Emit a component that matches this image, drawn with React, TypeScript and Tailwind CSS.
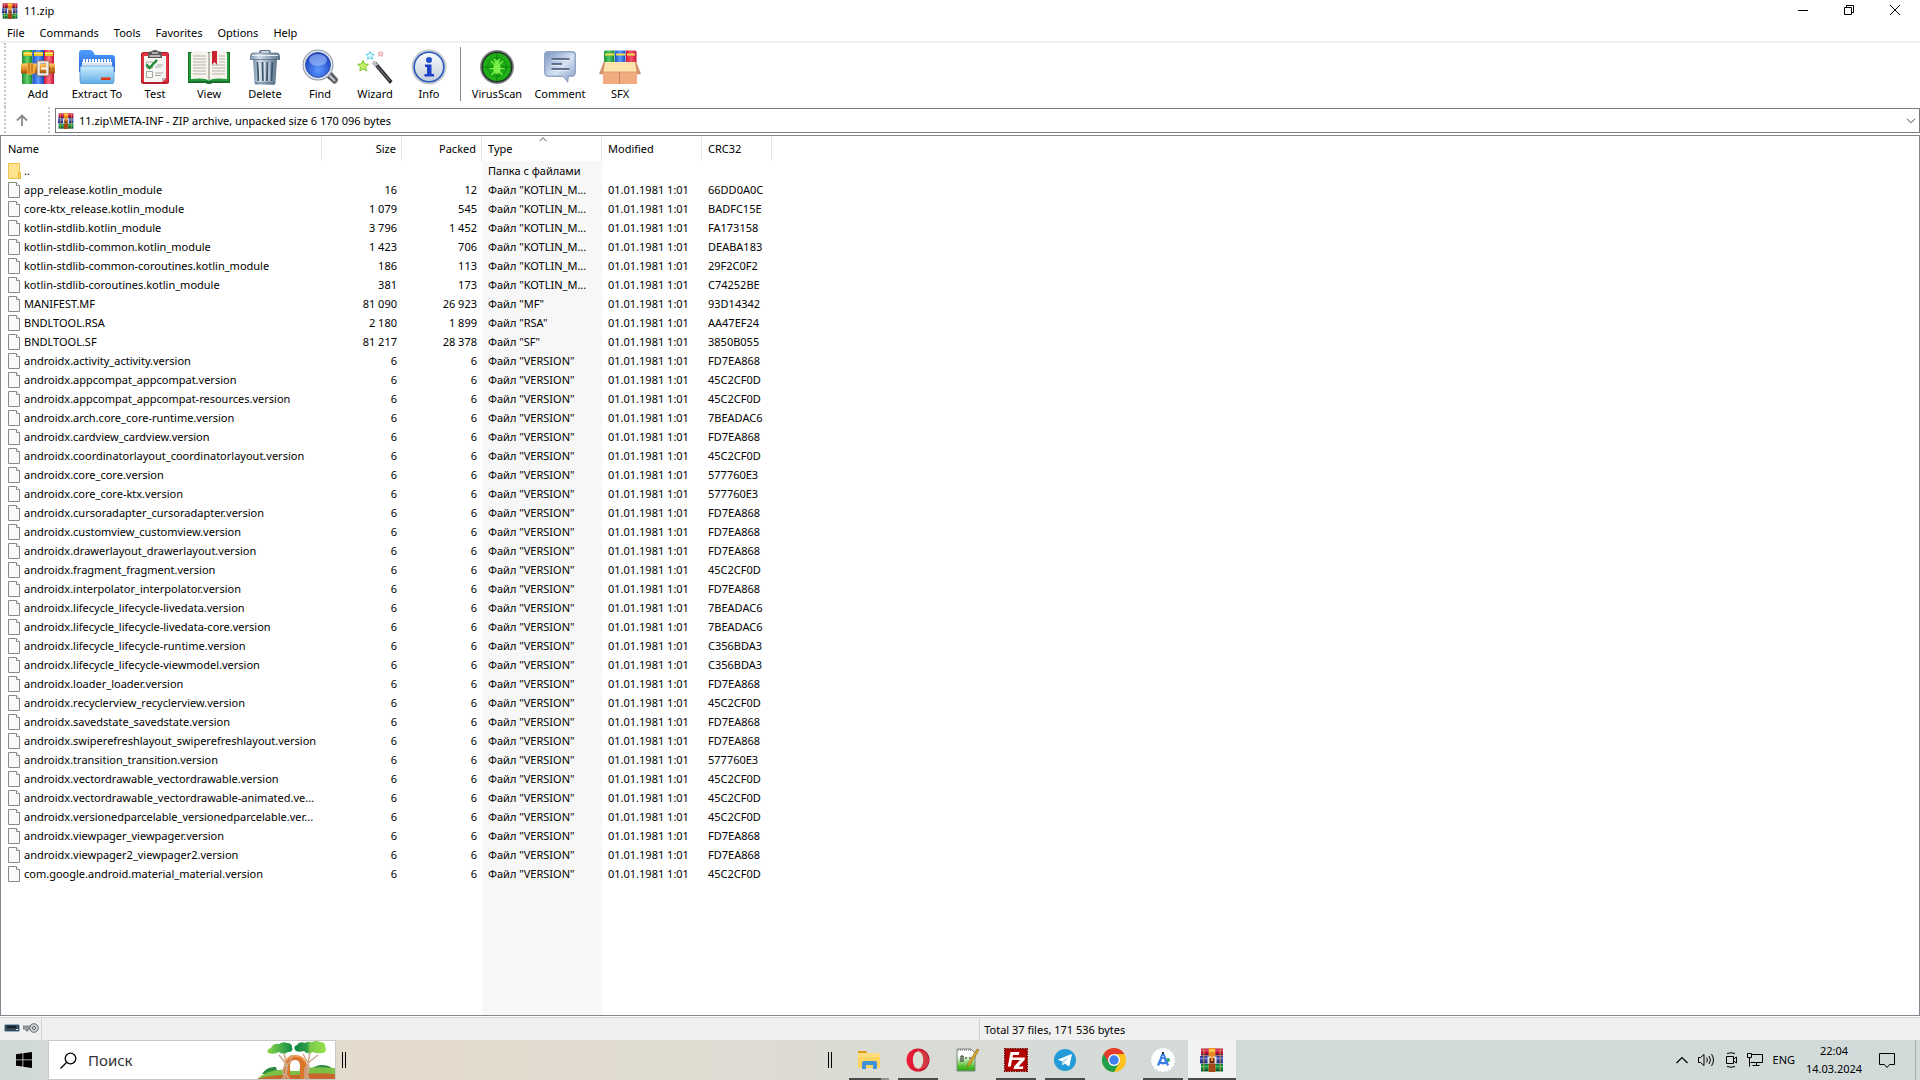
import React from "react";

type Row = [string, string, string, string, string];

const V = 'Файл "VERSION"';
const K = 'Файл "KOTLIN_M...';
const v = (name: string, crc: string): Row => [name + ".version", "6", "6", V, crc];

const rows: Row[] = [
  ["app_release.kotlin_module", "16", "12", K, "66DD0A0C"],
  ["core-ktx_release.kotlin_module", "1 079", "545", K, "BADFC15E"],
  ["kotlin-stdlib.kotlin_module", "3 796", "1 452", K, "FA173158"],
  ["kotlin-stdlib-common.kotlin_module", "1 423", "706", K, "DEABA183"],
  ["kotlin-stdlib-common-coroutines.kotlin_module", "186", "113", K, "29F2C0F2"],
  ["kotlin-stdlib-coroutines.kotlin_module", "381", "173", K, "C74252BE"],
  ["MANIFEST.MF", "81 090", "26 923", 'Файл "MF"', "93D14342"],
  ["BNDLTOOL.RSA", "2 180", "1 899", 'Файл "RSA"', "AA47EF24"],
  ["BNDLTOOL.SF", "81 217", "28 378", 'Файл "SF"', "3850B055"],
  v("androidx.activity_activity", "FD7EA868"),
  v("androidx.appcompat_appcompat", "45C2CF0D"),
  v("androidx.appcompat_appcompat-resources", "45C2CF0D"),
  v("androidx.arch.core_core-runtime", "7BEADAC6"),
  v("androidx.cardview_cardview", "FD7EA868"),
  v("androidx.coordinatorlayout_coordinatorlayout", "45C2CF0D"),
  v("androidx.core_core", "577760E3"),
  v("androidx.core_core-ktx", "577760E3"),
  v("androidx.cursoradapter_cursoradapter", "FD7EA868"),
  v("androidx.customview_customview", "FD7EA868"),
  v("androidx.drawerlayout_drawerlayout", "FD7EA868"),
  v("androidx.fragment_fragment", "45C2CF0D"),
  v("androidx.interpolator_interpolator", "FD7EA868"),
  v("androidx.lifecycle_lifecycle-livedata", "7BEADAC6"),
  v("androidx.lifecycle_lifecycle-livedata-core", "7BEADAC6"),
  v("androidx.lifecycle_lifecycle-runtime", "C356BDA3"),
  v("androidx.lifecycle_lifecycle-viewmodel", "C356BDA3"),
  v("androidx.loader_loader", "FD7EA868"),
  v("androidx.recyclerview_recyclerview", "45C2CF0D"),
  v("androidx.savedstate_savedstate", "FD7EA868"),
  v("androidx.swiperefreshlayout_swiperefreshlayout", "FD7EA868"),
  v("androidx.transition_transition", "577760E3"),
  v("androidx.vectordrawable_vectordrawable", "45C2CF0D"),
  ["androidx.vectordrawable_vectordrawable-animated.ve...", "6", "6", V, "45C2CF0D"],
  ["androidx.versionedparcelable_versionedparcelable.ver...", "6", "6", V, "45C2CF0D"],
  v("androidx.viewpager_viewpager", "FD7EA868"),
  v("androidx.viewpager2_viewpager2", "FD7EA868"),
  v("com.google.android.material_material", "45C2CF0D"),
];

/* ---------- icons ---------- */

const Books = ({ className = "size-4" }: { className?: string }) => (
  <svg viewBox="0 0 24 24" className={`${className} shrink-0`}>
    <path d="M1 .5h22v7H1z" fill="#b3123f" />
    <path d="M1 1.5h22v2H1z" fill="#e2456c" />
    <path d="M0 8h23v7.5H0z" fill="#2f3f9c" />
    <path d="M0 9.500h23v2H0z" fill="#6a7bd0" />
    <path d="M1 16h22v7.500H1z" fill="#0b7d3b" />
    <path d="M1 17.500h22v2H1z" fill="#36b35f" />
    <path d="M1 6h8v1.200H1zM15 6h8v1.200h-8zM1 14h8v1H1zM15 14h7v1h-7zM1 22h8v1H1zM15 22h8v1h-8z" fill="#111b3a" opacity=".65" />
    <path d="M3 .5h1.500v7H3zM19.500.5H21v7h-1.500zM3 8h1.500v7.500H3zM19.500 8H21v7.500h-1.500zM3 16h1.500v7.500H3zM19.500 16H21v7.500h-1.500z" fill="#d9a93a" opacity=".55" />
    <path d="M8.500 0h7v7l-1 2v7l1 1v7h-7v-7l1-1V9l-1-2z" fill="#e98a22" />
    <path d="M9 16h6v8H9z" fill="#a4481a" />
    <path d="M9 1h6v3H9z" fill="#ffc24a" />
    <path d="M7.500 8.500h9v7h-9z" fill="#e8e4dc" />
    <path d="M9.500 10h5v5.500h-5z" fill="#6a2c18" />
    <path d="M11 8h2v5h-2z" fill="#f59a2b" />
  </svg>
);

const AddIcon = () => (
  <svg viewBox="0 0 34 34" className="size-[34px]">
    <defs>
      <linearGradient id="ag"><stop offset="0" stopColor="#1f8f35" /><stop offset=".5" stopColor="#63d26a" /><stop offset="1" stopColor="#17812d" /></linearGradient>
      <linearGradient id="ab"><stop offset="0" stopColor="#1d4fc4" /><stop offset=".5" stopColor="#5b9bff" /><stop offset="1" stopColor="#1a43b0" /></linearGradient>
      <linearGradient id="ar"><stop offset="0" stopColor="#cf1538" /><stop offset=".5" stopColor="#ff6f85" /><stop offset="1" stopColor="#c30f2f" /></linearGradient>
      <linearGradient id="ao" x2="0" y2="1"><stop offset="0" stopColor="#ffd065" /><stop offset=".5" stopColor="#e8912a" /><stop offset="1" stopColor="#9c4a0c" /></linearGradient>
    </defs>
    <path d="M1 2q0-2 2-2h8.500v34H1z" fill="url(#ag)" />
    <path d="M11.500 0H23v34H11.500z" fill="url(#ab)" />
    <path d="M23 0h8q2 0 2 2v32H23z" fill="url(#ar)" />
    <path d="M2.500 2H11v4H2.500zM13 2h9v4h-9zM24 2h8v4h-8z" fill="#e9c51f" />
    <path d="M2.500 3H11v1H2.500zM13 3h9v1h-9zM24 3h8v1h-8z" fill="#fff08a" />
    <path d="M0 13.500h34v10H0z" fill="url(#ao)" />
    <path d="M6 12.500q5 0 8 2.500v8q-3 2-8 2z" fill="#f3aa3d" />
    <path d="M8 13v11M11 14v9" stroke="#a75a12" />
    <path d="M17.500 12h9v12.500h-9z" fill="none" stroke="#ededed" strokeWidth="2.600" />
    <path d="M16 11h12v15H16z" fill="none" stroke="#7b4a18" strokeWidth=".6" />
    <path d="M20 17.500h6v2h-6z" fill="#fff" />
    <path d="M28.500 18.500h1M31.500 18.500h1" stroke="#6d3304" strokeWidth="2" />
  </svg>
);

const ExtractIcon = () => (
  <svg viewBox="0 0 36 34" className="h-[34px] w-9">
    <defs>
      <linearGradient id="ef" x2="0" y2="1"><stop offset="0" stopColor="#cdeeff" /><stop offset="1" stopColor="#5cabe2" /></linearGradient>
      <linearGradient id="eb" x2="0" y2="1"><stop offset="0" stopColor="#4d9cff" /><stop offset="1" stopColor="#2563d6" /></linearGradient>
    </defs>
    <path d="M0 3q0-3 3-3h8q2 0 3 1.500L16 5h17q3 0 3 3v14H0z" fill="url(#eb)" />
    <path d="M3 12h30v8H3z" fill="#eef4fa" />
    <path d="M4 10.500h28" stroke="#fff" strokeWidth="3" strokeDasharray="2 1" />
    <path d="M4 14h28" stroke="#c8d3df" />
    <path d="M1 18q0-2 2-2h30q2 0 2 2v13q0 3-3 3H4q-3 0-3-3z" fill="url(#ef)" stroke="#4b95d6" strokeWidth=".8" />
    <path d="M2 24h32" stroke="#9dd2f3" />
    <path d="M22 27.500h9.500v2.500H22z" fill="#e33516" />
  </svg>
);

const TestIcon = () => (
  <svg viewBox="0 0 30 34" className="h-[34px] w-[30px]">
    <rect x="1" y="2" width="28" height="32" rx="2.500" fill="#b81d2a" />
    <rect x="2" y="3" width="26" height="29" rx="2" fill="#de3341" />
    <path d="M4 6h22v22l-4 4H4z" fill="#f6f6f4" />
    <path d="M22 32v-4h4z" fill="#b9b9b5" />
    <path d="M8 3q0-1.500 2-1.500h1.500Q12 0 15 0t3.500 1.500H20q2 0 2 1.500v5H8z" fill="#5a5556" />
    <path d="M9.500 6h11" stroke="#d4d4d4" strokeWidth="1.600" />
    <path d="M12 3h6" stroke="#ccc" strokeWidth="1.500" />
    <path d="M6.500 12h6v6h-6zM6.500 21.500h6v6h-6z" fill="none" stroke="#a6a6a3" />
    <path d="m6.500 14.500 3 3.500 7.500-8" fill="none" stroke="#1f8b33" strokeWidth="2.500" />
    <path d="M17 15h6M15 17h6M15 23h8M15 25.500h6" stroke="#a8a8a5" />
  </svg>
);

const ViewIcon = () => (
  <svg viewBox="0 0 42 34" className="h-[34px] w-[42px]">
    <path d="M0 2h42v31H24l-1 1h-4l-1-1H0z" fill="#176f2a" />
    <path d="M1 3h40v28H1z" fill="#259a3c" />
    <path d="M3 3q1-2 8-2 8 0 10 2 2-2 10-2 7 0 8 2v26q-14-1.500-18 1.500Q17 27.500 3 29z" fill="#f7f4ee" />
    <path d="M21 3v27" stroke="#a7a49b" strokeWidth="1.500" />
    <path d="M5 6h13M5 9h13M5 12h13M5 15h13M5 18h13M5 21h13M5 24h13M31 6h6M31 9h6M31 12h6M24 15h13M24 18h13M24 21h13M24 24h13" stroke="#b5b2aa" />
    <path d="M24 1h5v14l-2.500-3-2.500 3z" fill="#c9212d" />
  </svg>
);

const DeleteIcon = () => (
  <svg viewBox="0 0 30 35" className="h-[35px] w-[30px]">
    <defs><linearGradient id="dg"><stop offset="0" stopColor="#7890a8" /><stop offset=".3" stopColor="#d3dfeb" /><stop offset=".65" stopColor="#93a8be" /><stop offset="1" stopColor="#5d7489" /></linearGradient></defs>
    <path d="M10 3.500V2q0-1.500 2-1.500h6q2 0 2 1.500v1.500" fill="none" stroke="#5e7286" strokeWidth="1.500" />
    <path d="M3 9h24l-1.500 24q-.2 2-2 2h-17q-1.800 0-2-2z" fill="url(#dg)" />
    <path d="M1 4.500Q1 3 3 3h24q2 0 2 1.500L30 7v2.500H0V7z" fill="url(#dg)" stroke="#536a80" strokeWidth=".7" />
    <path d="M2 5.500h26" stroke="#e7eff6" />
    <path d="m7.500 12 1 19M12.500 12l.5 19M17.500 12l-.5 19M22.500 12l-1 19" stroke="#3f556b" strokeWidth="1.800" />
    <path d="m9 12 1 19M14.300 12v19M19 12v19" stroke="#edf3f8" strokeWidth=".8" />
    <path d="M5 33h20" stroke="#516679" />
  </svg>
);

const FindIcon = () => (
  <svg viewBox="0 0 36 36" className="size-9">
    <defs><radialGradient id="fg" cx=".5" cy=".7" r=".7"><stop offset="0" stopColor="#5d9bff" /><stop offset="1" stopColor="#1337b8" /></radialGradient></defs>
    <path d="m24 24 4-3 8 9q0 4-4 5l-9-8z" fill="#5d6067" />
    <path d="m26 25 7 7" stroke="#c5c8ce" strokeWidth="2" />
    <circle cx="16" cy="16" r="15.500" fill="#8f98a8" />
    <circle cx="16" cy="16" r="14.500" fill="#dfe5ee" />
    <circle cx="16" cy="16" r="12.500" fill="url(#fg)" stroke="#2b4aa2" strokeWidth=".8" />
    <ellipse cx="16" cy="11" rx="9" ry="6" fill="#a9c4ff" opacity=".6" />
  </svg>
);

const WizardIcon = () => (
  <svg viewBox="0 0 36 35" className="h-[35px] w-9">
    <path d="m16 14 3-2.500L35.500 31 33 34z" fill="#2f3033" />
    <path d="m14.500 13 3-2.500 3.500 4-3 2.500z" fill="#bfc1c4" />
    <path d="m19 15 14 16" stroke="#85878c" />
    <path d="m6 10.500 1.600 3.500 3.800.3-2.700 2.700 1.100 3.900-3.800-2-3.200 2 .7-3.900L.7 14.300l3.600-.4z" fill="#c4f06a" stroke="#7ac42c" />
    <path d="m13 1.500 1.300 2.600 2.800.3-2 2 .7 2.800-2.800-1.400-2.400 1.600.4-2.900-1.800-1.900 2.500-.4z" fill="#e6fafe" stroke="#58cde6" />
    <path d="m23.500 1.200.8 1.600 2 .2-1.400 1.400.4 1.900-1.800-1-1.800.9.400-1.900-1.200-1.300 2-.2z" fill="#ffe6e6" stroke="#ee8b8e" strokeWidth=".8" />
  </svg>
);

const InfoIcon = () => (
  <svg viewBox="0 0 36 36" className="size-9">
    <defs><linearGradient id="ig" x2="0" y2="1"><stop offset="0" stopColor="#f8fafc" /><stop offset="1" stopColor="#c4cedb" /></linearGradient></defs>
    <circle cx="18" cy="18" r="17.500" fill="#c3c9d1" />
    <circle cx="18" cy="18" r="14.800" fill="url(#ig)" stroke="#2859bd" strokeWidth="1.600" />
    <circle cx="18" cy="11" r="3" fill="#1d4fcc" />
    <path d="M14 15.500h6.500V25H23v2.500H13.500V25H16v-7h-2z" fill="#1b41c4" />
  </svg>
);

const VirusIcon = () => (
  <svg viewBox="0 0 34 34" className="size-[34px]">
    <circle cx="17" cy="17" r="17" fill="#858a8b" />
    <circle cx="17" cy="17" r="15.500" fill="#24342a" />
    <circle cx="17" cy="17" r="14" fill="#1fae16" />
    <path d="M17 3v28M3 17h28" stroke="#0d7d10" />
    <circle cx="17" cy="17" r="9.500" fill="none" stroke="#0c8a10" />
    <path d="m11 11 4 4m8-4-4 4M9.500 18.500h15M11.500 25l3.500-4m7.500 4L19 21M14 9l3 3 3-3" stroke="#7df04a" strokeWidth="1.200" fill="none" />
    <ellipse cx="17" cy="18.500" rx="3.800" ry="5.200" fill="#7df04a" />
    <circle cx="17" cy="12.500" r="2.300" fill="#7df04a" />
  </svg>
);

const CommentIcon = () => (
  <svg viewBox="0 0 32 34" className="h-[34px] w-8">
    <defs><linearGradient id="cg" x2="1" y2="1"><stop offset="0" stopColor="#7f9ac6" /><stop offset=".55" stopColor="#d5e2f2" /><stop offset="1" stopColor="#88a0ca" /></linearGradient></defs>
    <path d="M4 1h24q4 0 4 4v17q0 5-5 5h-2l-1 6-5-6H5q-5 0-5-5V5q0-4 4-4z" fill="#92a5c5" />
    <path d="M5 2.500h22q3.500 0 3.500 3.500v16q0 3.500-3.500 3.500h-3.500L23 30l-4-4.500H5q-3.500 0-3.500-3.500V6q0-3.500 3.500-3.500z" fill="url(#cg)" />
    <path d="M7.500 10h18M7.500 15h10.500M7.500 20h18" stroke="#fff" />
    <path d="M7.500 9h18M7.500 14h10.500M7.500 19h18" stroke="#3e4e6c" strokeWidth="1.600" />
  </svg>
);

const SfxIcon = () => (
  <svg viewBox="0 0 42 34" className="h-[34px] w-[42px]">
    <defs>
      <linearGradient id="sg"><stop offset="0" stopColor="#17943a" /><stop offset=".5" stopColor="#4fc86a" /><stop offset="1" stopColor="#148235" /></linearGradient>
      <linearGradient id="sb"><stop offset="0" stopColor="#1d57cc" /><stop offset=".5" stopColor="#5c9cff" /><stop offset="1" stopColor="#1a4bb8" /></linearGradient>
      <linearGradient id="sr"><stop offset="0" stopColor="#d81738" /><stop offset=".5" stopColor="#f9556e" /><stop offset="1" stopColor="#c81232" /></linearGradient>
    </defs>
    <path d="M5 2q0-1.500 1.500-1.500H15.500v13H5z" fill="url(#sg)" />
    <path d="M16 .5h10.500v13H16z" fill="url(#sb)" />
    <path d="M27 .5h9Q37.500.500 37.500 2v11.500H27z" fill="url(#sr)" />
    <path d="M6 4.500h9M17 4.500h9M28 4.500h8" stroke="#f7e04a" strokeWidth="2" />
    <path d="M4 14h34v20H4z" fill="#f2aa80" />
    <path d="M5 12h32l1 10H4z" fill="#ffe3ae" />
    <path d="m5 11-5 13 4 .5L6 13zM37 11l5 13-4 .5L36 13z" fill="#d3946b" />
    <path d="M4 22h34" stroke="#e89b6c" />
    <path d="M20.500 22v12" stroke="#c98560" />
  </svg>
);

const FileIcon = () => (
  <svg viewBox="0 0 12 16" className="h-4 w-3 shrink-0">
    <path d="M.5.500h8l3 3v12H.5z" fill="#f8f9fa" stroke="#8a8a8a" />
    <path d="M8.500.5v3h3" fill="#fff" stroke="#8a8a8a" />
  </svg>
);

const FolderIcon = () => (
  <svg viewBox="0 0 13 16" className="h-4 w-[13px] shrink-0">
    <path d="M.5.500h11v15H.5z" fill="#ffe38f" stroke="#ecc34d" />
    <path d="M10.500 9.500h2v6h-2z" fill="#ffd766" stroke="#e3b53c" />
  </svg>
);

/* ---------- toolbar ---------- */

const tools = [
  { label: "Add", icon: <AddIcon />, w: "w-14" },
  { label: "Extract To", icon: <ExtractIcon />, w: "w-[62px]" },
  { label: "Test", icon: <TestIcon />, w: "w-[54px]" },
  { label: "View", icon: <ViewIcon />, w: "w-[54px]" },
  { label: "Delete", icon: <DeleteIcon />, w: "w-[58px]" },
  { label: "Find", icon: <FindIcon />, w: "w-[52px]" },
  { label: "Wizard", icon: <WizardIcon />, w: "w-[58px]" },
  { label: "Info", icon: <InfoIcon />, w: "w-[50px]" },
];
const tools2 = [
  { label: "VirusScan", icon: <VirusIcon />, w: "w-[60px]" },
  { label: "Comment", icon: <CommentIcon />, w: "w-[66px]" },
  { label: "SFX", icon: <SfxIcon />, w: "w-[54px]" },
];

const ToolButton = ({ label, icon, w }: { label: string; icon: React.ReactNode; w: string }) => (
  <button className={`${w} flex shrink-0 flex-col items-center pt-1.5 whitespace-nowrap`}>
    <span className="flex h-9 items-center">{icon}</span>
    <span className="leading-[18px]">{label}</span>
  </button>
);

/* ---------- task bar ---------- */

const TreesArt = () => (
  <svg viewBox="0 0 78 38" className="h-[38px] w-[78px]">
    <defs>
      <linearGradient id="tl"><stop offset="0" stopColor="#8ed34a" /><stop offset=".4" stopColor="#58bb48" /><stop offset="1" stopColor="#108a46" /></linearGradient>
      <linearGradient id="tr"><stop offset="0" stopColor="#0f8544" /><stop offset=".4" stopColor="#2f9c48" /><stop offset=".5" stopColor="#7acb4a" /><stop offset="1" stopColor="#9ae04f" /></linearGradient>
    </defs>
    <path d="M5 33q5-8 14-7l2 7zM54 28q9-7 20-2v6H54z" fill="#2c8b3f" />
    <path d="M0 38q12-11 32-9 22-4 46-2v11z" fill="#7cc045" />
    <path d="M0 38q20-5 38-4 20-3 40-1v5z" fill="#c8662b" />
    <path d="M27 38V24q2-10 11-10 10 0 12 10v14h-7V25q0-6-5-6t-5 6v13z" fill="#d9762c" />
    <path d="M33.500 30v-5q0-5.500 4.500-5.500t4.500 5.500v5z" fill="#fff" />
    <path d="M29 20q2-5 9-5 8 0 10 6" stroke="#f3a55c" strokeWidth="1.500" fill="none" />
    <path d="M28 38q-4-10 1-15l-7-9m7 9-2-12m1 14q7-4 6-11M25 38q7-8 4-15m3 15q-6-6-1-14M47 38q7-8 4-16l-5-9m5 9 10-8m-10 8 2-11m-3 27q-5-8 1-15m1 15q-4-8 0-14" stroke="#cfa98c" strokeWidth="1.500" fill="none" />
    <path d="M11 12q-2-4 3-5 2-5 8-4 4-3 8-1 5 0 5 4 2 5-4 5-5 3-9 0-5 3-11 1z" fill="url(#tl)" />
    <path d="M38 9q-2-4 2-5 2-4 8-2 3-2 7-1 5-2 8 0 6 0 5 5 3 5-3 6-5 1-9-1-6 3-9-1-7 2-9-1z" fill="url(#tr)" />
  </svg>
);

const ExplorerIcon = () => (
  <svg viewBox="0 0 24 24" className="size-6">
    <path d="M1 3h8l2 3h-10z" fill="#dc9b12" />
    <path d="M1 6h22v14H1z" fill="#ffd35f" />
    <path d="M1 5h21q1 0 1 1v3H1z" fill="#ffdc7d" />
    <path d="M5 21v-6q0-2 2-2h11q2 0 2 2v6h-4v-4H9v4z" fill="#3f92d6" />
  </svg>
);
const OperaIcon = () => (
  <svg viewBox="0 0 24 24" className="size-6">
    <defs><linearGradient id="og" x2="1"><stop offset="0" stopColor="#f11e3a" /><stop offset="1" stopColor="#ad0c1f" /></linearGradient></defs>
    <circle cx="12" cy="12" r="11.500" fill="url(#og)" />
    <path d="M12 2q6 1 8 3 3 3 3 7t-3 7q-2 2-8 3z" fill="#f4777a" opacity=".4" />
    <ellipse cx="12" cy="12" rx="5.200" ry="8.800" fill="#dcdfd3" />
  </svg>
);
const NotepadIcon = () => (
  <svg viewBox="0 0 24 24" className="size-6">
    <defs><linearGradient id="ng" x2="0" y2="1"><stop offset=".3" stopColor="#fff" /><stop offset=".8" stopColor="#4fc02a" /><stop offset="1" stopColor="#2f9f18" /></linearGradient></defs>
    <path d="M2 1h14l4 4v18H2z" fill="url(#ng)" stroke="#7d8a7a" />
    <path d="M3 2h13" stroke="#444" strokeDasharray="1 1" />
    <path d="M6 14V8h2v6M10 10h2m2 0h2" stroke="#222" fill="none" />
    <path d="m22 1 2 1-9 15-3 2 1-4z" fill="#dba628" stroke="#795a14" strokeWidth=".5" />
  </svg>
);
const FileZillaIcon = () => (
  <svg viewBox="0 0 24 24" className="size-6">
    <path d="M.7.700h22.600v22.600H.7z" fill="#b30000" stroke="#6d0000" strokeDasharray="1.500 1" strokeWidth="1.400" />
    <path d="M6.500 4h9l-.7 3H9l-.5 2.500h5L13 12H8l-1.200 6.500h-3zM12.500 9.500h8.500l-.5 2.500-6 6.500h5l-.7 2.500H9.500l.5-2.500 6-6.500h-4z" fill="#fff" />
  </svg>
);
const TelegramIcon = () => (
  <svg viewBox="0 0 24 24" className="size-6">
    <circle cx="12" cy="12" r="11" fill="#239bd7" />
    <path d="M4.500 11.800 18 6.300q1-.3.800.9l-2.300 10.300q-.3 1-1.200.5l-3.500-2.600-1.700 1.700q-.6.500-.8-.3l-.5-3.500z" fill="#fff" />
    <path d="m8.800 13.500 7.500-5-5.500 6-.6 2.500z" fill="#a9cfe5" />
  </svg>
);
const ChromeIcon = () => (
  <svg viewBox="0 0 24 24" className="size-6">
    <circle cx="12" cy="12" r="12" fill="#fcc31e" />
    <path d="M12 12 1.600 6A12 12 0 0 0 12 24l5.200-9z" fill="#20a04b" />
    <path d="M1.600 6A12 12 0 0 1 22.400 6H12l-5.200 9z" fill="#e33b2e" />
    <circle cx="12" cy="12" r="6" fill="#fff" />
    <circle cx="12" cy="12" r="4.700" fill="#3f7fee" />
  </svg>
);
const StudioIcon = () => (
  <svg viewBox="0 0 24 24" className="size-6">
    <circle cx="12" cy="12" r="11" fill="#fff" stroke="#fff" strokeWidth="2" strokeDasharray="3 1" />
    <circle cx="17" cy="12" r="2" fill="#34a767" />
    <path d="m12 6-5 11.500M12 6l5 11.500M7.500 14q4.500 2.500 9 0" stroke="#3b7ee8" strokeWidth="2.400" fill="none" />
    <path d="M11 4h2v3h-2z" fill="#263238" />
    <circle cx="12" cy="8.500" r="2.400" fill="#3b7ee8" />
    <circle cx="12" cy="8.500" r=".8" fill="#fff" />
  </svg>
);

const apps = [
  { name: "File Explorer", icon: <ExplorerIcon />, run: "stack" },
  { name: "Opera", icon: <OperaIcon />, run: "open" },
  { name: "Notepad++", icon: <NotepadIcon />, run: "none" },
  { name: "FileZilla", icon: <FileZillaIcon />, run: "open" },
  { name: "Telegram", icon: <TelegramIcon />, run: "open" },
  { name: "Chrome", icon: <ChromeIcon />, run: "none" },
  { name: "Android Studio", icon: <StudioIcon />, run: "open" },
  { name: "WinRAR", icon: <Books className="size-6" />, run: "active" },
];

const Grip = () => (
  <span className="flex h-4 w-1 justify-between">
    <span className="w-px bg-black" />
    <span className="w-px bg-black" />
  </span>
);

const head = "border-r border-[#e5e5e5] p-0 text-left font-normal";

export default function App() {
  return (
    <div className="flex h-screen flex-col overflow-hidden bg-white font-['Noto_Sans','Open_Sans',sans-serif] text-[11px] leading-4 text-black">
      <header className="flex h-[22px] shrink-0 items-start">
        <div className="flex flex-1 items-center gap-1.5 pt-[3px] pl-0.5">
          <Books />
          <h1>11.zip</h1>
        </div>
        <div className="flex">
          <button aria-label="Minimize" className="flex h-5 w-[46px] items-center justify-center">
            <svg viewBox="0 0 10 10" className="size-2.5"><path d="M0 5.500h10" stroke="#000" /></svg>
          </button>
          <button aria-label="Restore" className="flex h-5 w-[45px] items-center justify-center">
            <svg viewBox="0 0 10 10" className="size-2.5" fill="none" stroke="#000"><path d="M.5 2.500h7v7h-7zM2.500 2.500v-2h7v7h-2" /></svg>
          </button>
          <button aria-label="Close" className="mr-0.5 flex h-5 w-[47px] items-center justify-center">
            <svg viewBox="0 0 10 10" className="size-2.5"><path d="m0 0 10 10M10 0 0 10" stroke="#000" /></svg>
          </button>
        </div>
      </header>

      <nav className="flex h-[21px] shrink-0 items-start gap-[15px] border-b-2 border-[#f0f0f0] pt-[3px] pl-[7px]">
        {["File", "Commands", "Tools", "Favorites", "Options", "Help"].map((m) => (
          <button key={m}>{m}</button>
        ))}
      </nav>

      <div className="flex h-16 shrink-0 pl-1">
        <span className="w-1.5 border-l-2 border-dotted border-[#c8c8c8]" />
        {tools.map((t) => <ToolButton key={t.label} {...t} />)}
        <span className="mx-1.5 mt-1 h-[54px] w-px bg-[#8a8a8a]" />
        {tools2.map((t) => <ToolButton key={t.label} {...t} />)}
      </div>

      <div className="flex h-[26px] shrink-0 pl-1">
        <div className="flex w-11 items-center border-l-2 border-dotted border-[#c8c8c8] pl-2.5">
          <button aria-label="Up one level">
            <svg viewBox="0 0 12 12" className="size-3" fill="none" stroke="#8a8a8a" strokeWidth="1.800"><path d="M6 12V1.500M1 6.500l5-5 5 5" /></svg>
          </button>
        </div>
        <span className="w-[7px] border-l-2 border-dotted border-[#c8c8c8]" />
        <div className="mt-px flex flex-1 items-center gap-[5px] border border-[#7a7a7a] pl-0.5">
          <Books />
          <input aria-label="Archive path" className="min-w-0 flex-1 outline-none" defaultValue="11.zip\META-INF - ZIP archive, unpacked size 6 170 096 bytes" />
          <button aria-label="Show path list" className="flex h-full w-4 items-center justify-center">
            <svg viewBox="0 0 10 6" className="h-1.5 w-2.5" fill="none" stroke="#444"><path d="m1 .8 4 4 4-4" /></svg>
          </button>
        </div>
      </div>

      <main className="mt-0.5 min-h-0 flex-1 border border-[#828790]">
        <table className="h-full w-full table-fixed border-separate border-spacing-0">
          <colgroup>
            <col className="w-[321px]" />
            <col className="w-20" />
            <col className="w-20" />
            <col className="w-[120px]" />
            <col className="w-[100px]" />
            <col className="w-[70px]" />
            <col />
          </colgroup>
          <thead>
            <tr className="h-[25px]">
              <th className={`${head} pl-[7px]`}>Name</th>
              <th className={`${head} pr-[5px] text-right`}>Size</th>
              <th className={`${head} pr-[5px] text-right`}>Packed</th>
              <th className={`${head} relative pl-1.5`}>
                <svg viewBox="0 0 8 5" className="absolute top-px left-[57px] h-[5px] w-2" fill="none" stroke="#555"><path d="m.5 4.200 3.500-3.500 3.500 3.500" /></svg>
                Type
              </th>
              <th className={`${head} pl-1.5`}>Modified</th>
              <th className={`${head} pl-1.5`}>CRC32</th>
              <th className="p-0" />
            </tr>
          </thead>
          <tbody>
            <tr className="h-[19px]">
              <td className="p-0 pl-[7px]"><div className="flex items-center gap-[3px]"><FolderIcon />..</div></td>
              <td /><td />
              <td className="bg-[#f7f7f7] p-0 pl-1.5">Папка с файлами</td>
              <td /><td /><td />
            </tr>
            {rows.map(([name, size, packed, type, crc]) => (
              <tr key={name} className="h-[19px] whitespace-nowrap">
                <td className="p-0 pl-[7px]"><div className="flex items-center gap-1"><FileIcon />{name}</div></td>
                <td className="p-0 pr-[5px] text-right">{size}</td>
                <td className="p-0 pr-[5px] text-right">{packed}</td>
                <td className="bg-[#f7f7f7] p-0 pl-1.5">{type}</td>
                <td className="p-0 pl-1.5">01.01.1981 1:01</td>
                <td className="p-0 pl-1.5">{crc}</td>
                <td className="p-0" />
              </tr>
            ))}
            <tr>
              <td /><td /><td />
              <td className="bg-[#f7f7f7]" />
              <td /><td /><td />
            </tr>
          </tbody>
        </table>
      </main>

      <footer className="mt-px flex h-[23px] shrink-0 border-t border-[#d7d7d7] bg-[#f0f0f0]">
        <div className="mt-px flex w-[42px] gap-[3px] border-r border-[#d0d0d0] pt-0.5 pl-1">
          <svg viewBox="0 0 16 14" className="h-3.5 w-4"><rect x=".5" y="3.500" width="15" height="7" rx="1.500" fill="#394a54" stroke="#8fb0c4" /><path d="M3 6h9" stroke="#15202a" strokeWidth="2" /><path d="M12 8.500h2" stroke="#dff" /></svg>
          <svg viewBox="0 0 16 14" className="h-3.5 w-4"><path d="M0 5h8v4H7v-1H5v2H3V8H0z" fill="#9aa0a4" stroke="#555d62" strokeWidth=".6" /><circle cx="11" cy="7" r="4.300" fill="#cfd3d6" stroke="#62696e" /><circle cx="11" cy="7" r="1.500" fill="#fff" stroke="#555" /></svg>
        </div>
        <p className="flex-1" />
        <p className="mt-px w-[49%] border-l border-[#d0d0d0] pt-[3px] pl-1">Total 37 files, 171 536 bytes</p>
      </footer>

      <div className="flex h-10 shrink-0 items-stretch bg-linear-to-r from-[#d0d9d8] via-[#e6dccd] via-20% to-[#d2dada] to-65%">
        <button aria-label="Start" className="flex w-12 items-center justify-center">
          <svg viewBox="0 0 16 16" className="size-4"><path d="M0 2.200 6.500 1.300v6.200H0zM7.300 1.200 16 0v7.500H7.300zM0 8.300h6.500v6.300L0 13.700zM7.300 8.300H16V16l-8.700-1.200z" /></svg>
        </button>
        <label className="flex w-72 items-center border border-[#c9c9c9] bg-white pl-[11px]">
          <svg viewBox="0 0 17 17" className="size-[17px] shrink-0" fill="none" stroke="#000" strokeWidth="1.300"><circle cx="10.500" cy="6.500" r="5.300" /><path d="M6.500 10.500.5 16.500" /></svg>
          <input aria-label="Поиск" placeholder="Поиск" className="ml-[11px] w-0 flex-1 text-[15px] outline-none placeholder:text-[#333]" />
          <TreesArt />
        </label>
        <div className="flex flex-1 items-center justify-between pr-[17px] pl-1.5">
          <Grip />
          <Grip />
        </div>
        <div className="flex gap-[9px]">
          {apps.map((a) => (
            <button
              key={a.name}
              aria-label={a.name}
              className={`flex flex-col items-center ${a.run === "active" ? "-ml-1 w-12 bg-[#f0f3f2]" : "w-10"}`}
            >
              <span className="flex h-[38px] items-center pt-0.5">{a.icon}</span>
              <span className={`flex h-0.5 w-full justify-end ${a.run === "none" ? "" : "bg-[#4a4c4c]"}`}>
                {a.run === "stack" && <span className="w-2 bg-[#8f9290]" />}
              </span>
            </button>
          ))}
        </div>
        <div className="flex w-[35.600%] items-center justify-end">
          <button aria-label="Show hidden icons" className="mr-2.5">
            <svg viewBox="0 0 12 8" className="h-2 w-3" fill="none" stroke="#000" strokeWidth="1.200"><path d="m.5 7 5.500-5.500L11.500 7" /></svg>
          </button>
          <button aria-label="Volume" className="mr-2.5">
            <svg viewBox="0 0 17 16" className="h-4 w-[17px]" fill="none" stroke="#000"><path d="M.5 5.500h2L6 2.500v11l-3.500-3h-2zM8.500 5.500q2 2.500 0 5M11 4q3 4 0 8M13.500 2q4 6 0 12" /></svg>
          </button>
          <button aria-label="Camera" className="mr-2.5">
            <svg viewBox="0 0 12 16" className="h-4 w-3" fill="none" stroke="#000"><path d="M1.500 4.500h7v7h-7zM8.500 7l3-2v6l-3-2M2 1.500q4-1.500 8 0M2 14.500q4 1.500 8 0" /></svg>
          </button>
          <button aria-label="Network" className="mr-2.5">
            <svg viewBox="0 0 16 14" className="h-3.5 w-4" fill="none" stroke="#000"><path d="M5 1.500h10.500v8H3.500M9.500 9.500v3M5.500 12.500h7M.5.500h4v4h-4zM2.500 4.500v9" /></svg>
          </button>
          <button className="mr-3 text-[11px]">ENG</button>
          <button className="mr-[18px] w-[54px] text-center leading-[18px]">
            <time className="flex flex-col items-center"><span>22:04</span><span>14.03.2024</span></time>
          </button>
          <button aria-label="Notifications" className="mr-5">
            <svg viewBox="0 0 16 17" className="h-[17px] w-4" fill="none" stroke="#000"><path d="M.5 1.500h15v11h-5L8 15.500l-2.500-3h-5z" /></svg>
          </button>
          <span className="h-full w-[5px] border-l border-[#a5adad]" />
        </div>
      </div>
    </div>
  );
}
